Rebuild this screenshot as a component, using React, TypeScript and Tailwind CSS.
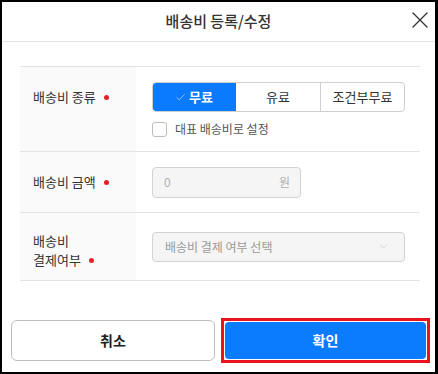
import { Check, ChevronDown, X } from 'lucide-react'

function Dot() {
  return <span className="inline-block w-[5px] h-[5px] rounded-full bg-[#e5202a] ml-[8px] align-middle relative -top-[1px]"></span>
}

export default function App() {
  return (
    <div
      className="w-[438px] h-[374px] bg-white border-2 border-r-[3px] border-black text-[#333] overflow-hidden"
      style={{ fontFamily: '"Noto Sans CJK KR", "Noto Sans", sans-serif' }}
    >
      {/* Header */}
      <div className="relative h-[40px] border-b border-[#e6e6e6] flex items-center justify-center">
        <h1 className="text-[15px] font-medium text-[#333] leading-none -mt-[2px]">배송비 등록/수정</h1>
        <button className="absolute right-[1px] top-[4px] text-[#333]">
          <X size={28} strokeWidth={1.1} />
        </button>
      </div>

      {/* Table */}
      <div className="pl-[18px] pr-[15px] pt-[24px]">
        <div className="border-t border-[#e3e3e3]">
          {/* Row 1 */}
          <div className="flex border-b border-[#e3e3e3] h-[85px]">
            <div className="w-[116px] bg-[#fafafa] pl-[13px] pt-[21px] text-[13px] leading-[18px]">
              배송비 종류<Dot />
            </div>
            <div className="flex-1 pl-[16px] pt-[15px]">
              <div className="flex w-[253px] h-[30px] border border-[#cfcfcf] rounded-[4px] overflow-hidden text-[13px]">
                <div className="w-[84px] -my-px -ml-px bg-[#0a7bff] text-white font-bold flex items-center justify-center gap-[3px] rounded-l-[4px]">
                  <Check size={11} strokeWidth={1.5} className="text-[#cfe4ff]" />
                  무료
                </div>
                <div className="w-[85px] border-r border-[#cfcfcf] flex items-center justify-center">유료</div>
                <div className="flex-1 flex items-center justify-center">조건부무료</div>
              </div>
              <label className="flex items-center mt-[8px] gap-[8px] text-[12px] text-[#555]">
                <span className="w-[15px] h-[15px] border border-[#bdbdbd] rounded-[3px] bg-white"></span>
                대표 배송비로 설정
              </label>
            </div>
          </div>

          {/* Row 2 */}
          <div className="flex border-b border-[#e3e3e3] h-[61px]">
            <div className="w-[116px] bg-[#fafafa] pl-[13px] flex items-center text-[13px] leading-[18px]">
              <span>배송비 금액<Dot /></span>
            </div>
            <div className="flex-1 pl-[16px] flex items-center">
              <div className="w-[149px] h-[31px] bg-[#f5f5f5] border border-[#d3d3d3] rounded-[4px] flex items-center justify-between pl-[11px] pr-[10px] text-[12px] text-[#b0b0b0]">
                <span>0</span>
                <span>원</span>
              </div>
            </div>
          </div>

          {/* Row 3 */}
          <div className="flex border-b border-[#e3e3e3] h-[68px]">
            <div className="w-[116px] bg-[#fafafa] pl-[13px] pt-[18px] text-[13px] leading-[19px]">
              <div>배송비</div>
              <div>결제여부<Dot /></div>
            </div>
            <div className="flex-1 pl-[16px] flex items-center">
              <div className="w-[253px] h-[30px] bg-[#f5f5f5] border border-[#d3d3d3] rounded-[4px] flex items-center justify-between pl-[12px] pr-[14px] text-[12px] text-[#9a9a9a]">
                <span>배송비 결제 여부 선택</span>
                <ChevronDown size={13} strokeWidth={1.2} className="text-[#c4c4c4]" />
              </div>
            </div>
          </div>
        </div>
      </div>

      {/* Footer */}
      <div className="flex items-center pl-[9px] mt-[37px]">
        <button className="w-[204px] h-[41px] border border-[#bdbdbd] rounded-[6px] bg-white text-[14px] font-bold text-[#222]">
          취소
        </button>
        <div className="ml-[6px] w-[209px] h-[45px] border-[3px] border-[#e8141d] p-px bg-white">
          <button className="w-full h-full rounded-[4px] bg-[#0b7bff] text-white text-[14px] font-bold">
            확인
          </button>
        </div>
      </div>
    </div>
  )
}
